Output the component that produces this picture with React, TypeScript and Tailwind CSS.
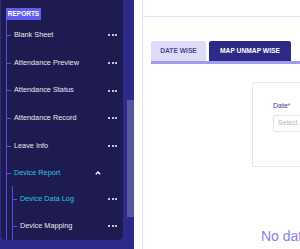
const Dots = () => (
  <span className="flex items-center gap-[1.5px]">
    <span className="h-[2px] w-[2px] rounded-full bg-white" />
    <span className="h-[2px] w-[2px] rounded-full bg-white" />
    <span className="h-[2px] w-[2px] rounded-full bg-white" />
  </span>
)

type Item = { label: string; h: string; active?: boolean }

const mainItems: Item[] = [
  { label: "Blank Sheet", h: "h-[28px]" },
  { label: "Attendance Preview", h: "h-[28px]" },
  { label: "Attendance Status", h: "h-[27px]" },
  { label: "Attendance Record", h: "h-[28px]" },
  { label: "Leave Info", h: "h-[28px]" },
]

const subItems: Item[] = [
  { label: "Device Data Log", h: "h-[26px]", active: true },
  { label: "Device Mapping", h: "h-[28px]" },
]

const Row = ({ item }: { item: Item }) => (
  <div className={`flex items-center ${item.h}`}>
    <span className="h-px w-[4px] bg-[#5451dc]" />
    <span className={`ml-[3px] ${item.active ? "text-[#27c6e4]" : "text-[#e8e8f2]"}`}>{item.label}</span>
    <span className="ml-auto mr-[6px]">
      <Dots />
    </span>
  </div>
)

export default function App() {
  return (
    <div
      className="flex h-[249px] w-[300px] overflow-hidden bg-white"
      style={{ fontFamily: '"Liberation Sans", Arial, sans-serif' }}
    >
      {/* sidebar */}
      <aside className="flex h-full w-[134px] shrink-0 bg-[#2e2a8a]">
        <nav className="ml-px h-[240px] w-[122px] shrink-0 rounded-b-[5px] bg-[#1e1b50] pl-[5px] pt-[8px] text-[7.3px] whitespace-nowrap">
          <div className="flex h-[12px] w-[35px] items-center justify-center bg-[#5e5ef0] text-[6.5px] font-bold text-white">
            REPORTS
          </div>

          {/* tree */}
          <div className="border-l border-[#5451dc] pt-px">
            {mainItems.map((it) => (
              <Row key={it.label} item={it} />
            ))}

            {/* device report group */}
            <div className="flex h-[26px] items-center">
              <span className="h-px w-[4px] bg-[#5451dc]" />
              <span className="ml-[3px] text-[#27c6e4]">Device Report</span>
              <svg className="ml-auto mr-[22px]" width="6" height="4" viewBox="0 0 6 4" fill="none">
                <path d="M0.8 3.3 L3 1 L5.2 3.3" stroke="#fff" strokeWidth="1.3" />
              </svg>
            </div>
            <div className="ml-[5px] border-l border-[#5451dc] pr-[0px]">
              {subItems.map((it) => (
                <Row key={it.label} item={it} />
              ))}
            </div>
          </div>
        </nav>

        {/* scrollbar */}
        <div className="ml-[4px] mt-[100px] h-[117px] w-[7px] bg-[#59569e]" />
      </aside>

      {/* content */}
      <main className="min-w-0 flex-1 pl-[8px]">
        <div className="h-full border-l border-[#e6e2fd]">
          <div className="h-[17px] border-b border-[#e6e2fd]" />

          <div className="pl-[8px] pt-[24px] whitespace-nowrap">
            {/* tabs */}
            <div className="flex gap-[3px] font-bold text-[6.7px]">
              <div className="flex h-[20px] w-[55px] items-center justify-center rounded-t-[2px] bg-[#dfdcfa] text-[#4c4a90]">
                DATE WISE
              </div>
              <div className="flex h-[20px] w-[82px] items-center justify-center rounded-t-[2px] bg-[#2d2a86] text-white">
                MAP UNMAP WISE
              </div>
            </div>
            <div className="h-[3px] w-[200px] bg-[#a09cec]" />

            {/* filter card */}
            <div className="ml-[101px] mt-[18px] h-[85px] w-[120px] rounded-tl-[3px] border border-[#e6e2fd] pl-[20px] pt-[18px]">
              <div className="text-[7px] leading-[9px] text-[#3d3b95]">
                Date<span className="text-[#e53e3e]">*</span>
              </div>
              <div className="mt-[5px] flex h-[17px] items-center rounded-l-[2px] border border-[#e4e4ee] pl-[4px] text-[7px] text-[#b8b8c4]">
                Select...
              </div>
            </div>

            <div className="ml-[110px] mt-[61px] text-[14px] leading-[17px] text-[#8784ef]">No data</div>
          </div>
        </div>
      </main>
    </div>
  )
}
